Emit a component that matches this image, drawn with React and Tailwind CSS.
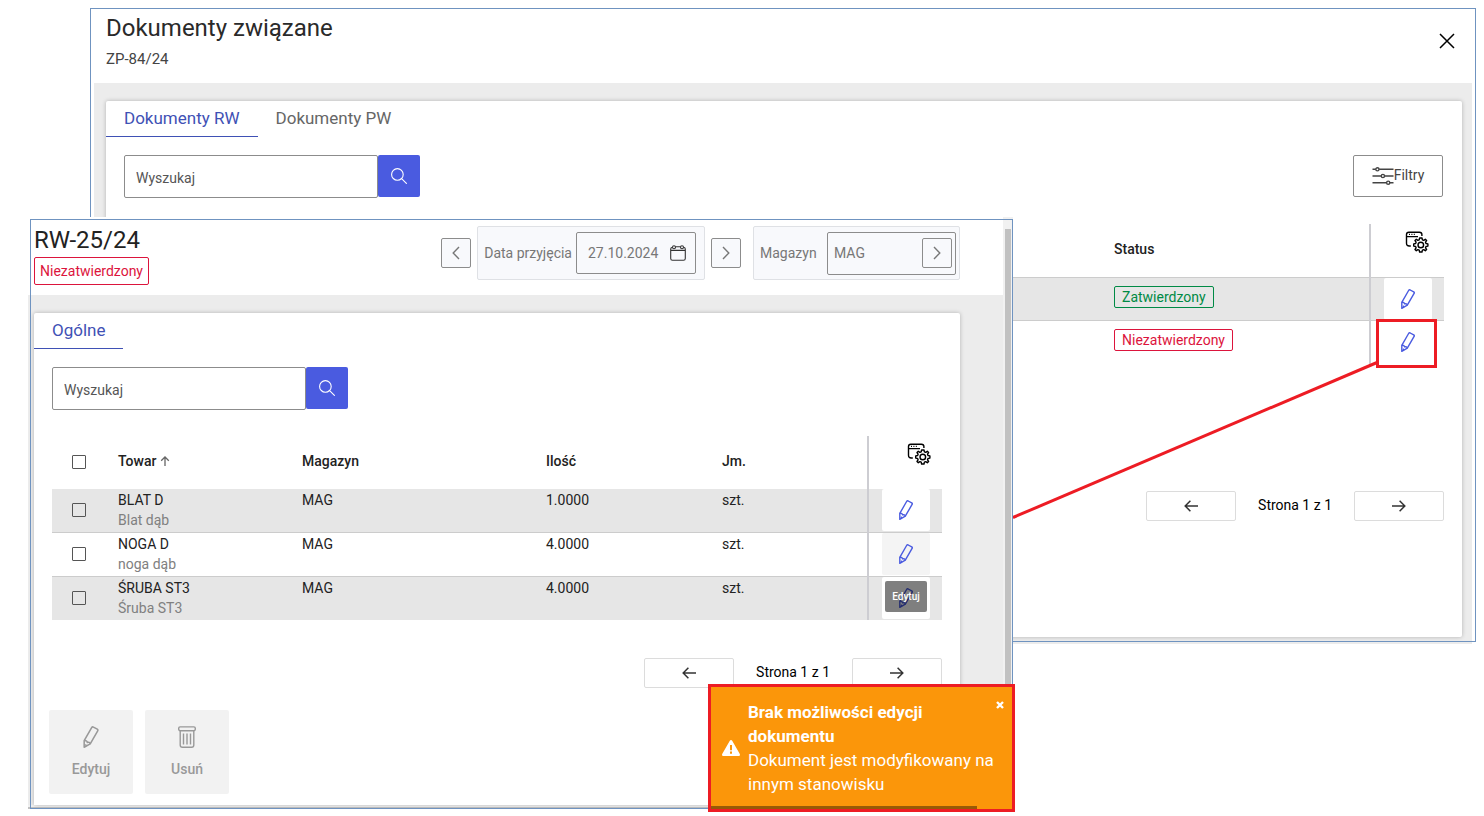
import React, { useState } from 'react';

const items = [
  { name: "BLAT D", desc: "Blat dąb", store: "MAG", qty: "1.0000", unit: "szt." },
  { name: "NOGA D", desc: "noga dąb", store: "MAG", qty: "4.0000", unit: "szt." },
  { name: "ŚRUBA ST3", desc: "Śruba ST3", store: "MAG", qty: "4.0000", unit: "szt." },
];

const documents = [
  { status: "Zatwierdzony", approved: true },
  { status: "Niezatwierdzony", approved: false },
];

/* Icons */
const PencilIcon = ({ className }) => (
  <svg viewBox="0 0 14 20" fill="none" stroke="currentColor" strokeWidth="1.4" strokeLinejoin="round" className={className}>
    <path d="M.8 13.4 7.6 1.5Q8.2.5 9.2 1L12.7 2.9Q13.6 3.5 13.1 4.4L6.3 16.2.8 19.3Z" />
    <path d="M.8 13.4Q3.3 12.9 3.6 14.9 5.8 14.3 6.3 16.2M1.8 16.8 3 18" />
  </svg>
);

const TrashIcon = ({ className }) => (
  <svg viewBox="0 0 18 22" fill="none" stroke="currentColor" strokeWidth="1.4" className={className}>
    <rect x=".7" y=".9" width="16.6" height="3.8" rx="1.4" />
    <path d="M2.2 4.9V19Q2.2 21.2 4.4 21.2H13.6Q15.8 21.2 15.8 19V4.9" />
    <path d="M5.5 7.4V18.4M9 7.4V18.4M12.500 7.4V18.4" />
  </svg>
);

const SearchIcon = () => (
  <svg viewBox="0 0 16 16" fill="none" stroke="currentColor" strokeWidth="1.1" strokeLinecap="round" className="w-4 h-4">
    <circle cx="6.4" cy="6.4" r="5.8" />
    <path d="M10.6 10.6 15.4 15.4" />
  </svg>
);

const FilterIcon = () => (
  <svg viewBox="0 0 22 18" fill="none" stroke="currentColor" strokeWidth="1.4" className="w-[22px] h-[18px]">
    <path d="M.5 2.3H3.7M7.1 2.3H21.5M.5 9H9.2M12.6 9H21.5M.5 15.7H14.5M17.9 15.7H21.5" />
    <circle cx="5.4" cy="2.3" r="1.6" />
    <circle cx="10.9" cy="9" r="1.6" />
    <circle cx="16.2" cy="15.7" r="1.6" />
  </svg>
);

const CalendarIcon = () => (
  <svg viewBox="0 0 16 16" fill="none" stroke="currentColor" strokeWidth="1.1" className="w-4 h-4 text-[#333333]">
    <path d="M2.4 2.2Q.7 2.4.7 4V13.4Q.7 15.2 2.5 15.2H13.5Q15.3 15.2 15.3 13.4V4Q15.3 2.4 13.6 2.2M5.4 1.8H10.6M.7 5.4H15.3" />
    <circle cx="4" cy="2.2" r="1.5" />
    <circle cx="12" cy="2.2" r="1.5" />
  </svg>
);

const ColumnsIcon = () => (
  <svg viewBox="0 0 24 22" fill="none" stroke="#000000" strokeWidth="1.4" className="w-6 h-[22px]">
    <path d="M5.8 15H4.2Q1.5 15 1.5 12.3V3.4Q1.5 1.2 3.8 1.2H14.4Q16.9 1.2 16.9 3.6V5M1.5 5.6H13" />
    <path d="M4 3.4H5M6.4 3.4H7.4M8.8 3.4H9.8" strokeWidth="1.1" />
    <circle cx="15.8" cy="14" r="2.8" />
    <path
      strokeLinejoin="round"
      d="M14.6 7H17L17.4 8.9 18.7 9.4 20.3 8.3 21.6 9.6 20.5 11.2 21 12.5 22.9 12.9V15.1L21 15.5 20.5 16.8 21.6 18.4 20.3 19.7 18.7 18.6 17.4 19.1 17 21H14.6L14.2 19.1 12.9 18.6 11.3 19.7 10 18.4 11.1 16.8 10.6 15.5 8.7 15.1V12.9L10.6 12.5 11.1 11.2 10 9.6 11.3 8.3 12.9 9.4 14.2 8.9Z"
    />
  </svg>
);

const Chevron = ({ left }) => (
  <svg viewBox="0 0 8 14" fill="none" stroke="currentColor" strokeWidth="1.4" className="w-2 h-3.5">
    <path d={left ? "M7 1 1.2 7 7 13" : "M1 1 6.8 7 1 13"} />
  </svg>
);

const Arrow = ({ left }) => (
  <svg viewBox="0 0 14 12" fill="none" stroke="#333333" strokeWidth="1.5" className="w-3.5 h-3">
    <path d={left ? "M14 6H1.2M6.4.8 1.2 6 6.4 11.2" : "M0 6H12.8M7.6.8 12.8 6 7.6 11.2"} />
  </svg>
);

/* Shared controls */
const Badge = ({ approved, className = "px-[7px]", children }) => (
  <span
    className={`inline-block rounded-xs border text-sm ${
      approved ? "border-[#008a45] text-[#008a45]" : "border-[#dc143c] text-[#dc143c]"
    } ${className}`}
  >
    {children}
  </span>
);

const Tab = ({ active, children }) => (
  <button
    type="button"
    className={`h-9 px-[18px] pb-0.5 text-[17px] leading-8 border-b ${
      active ? "border-[#3f51b5] text-[#3f51b5]" : "border-transparent text-[#666666]"
    }`}
  >
    {children}
  </button>
);

const SearchBox = () => (
  <form className="flex items-start" onSubmit={(e) => e.preventDefault()}>
    <input
      type="text"
      aria-label="Wyszukaj"
      placeholder="Wyszukaj"
      className="w-[254px] h-[43px] rounded-xs border border-[#8c8c8c] px-[11px] pt-0.5 text-sm placeholder:text-[#555555] outline-none"
    />
    <button type="submit" aria-label="Szukaj" className="w-[42px] h-[42px] rounded-xs bg-[#4a5be0] text-white flex items-center justify-center">
      <SearchIcon />
    </button>
  </form>
);

const StepButton = ({ left, label }) => (
  <button type="button" aria-label={label} className="w-[30px] h-[30px] shrink-0 rounded-xs border border-[#8c8c8c] bg-[#f8f9fc] text-[#777777] flex items-center justify-center">
    <Chevron left={left} />
  </button>
);

const EditButton = ({ className = "bg-white" }) => (
  <button type="button" aria-label="Edytuj" className={`w-12 h-[42px] rounded-xs text-[#4a5be0] flex items-center justify-center ${className}`}>
    <PencilIcon className="w-3.5 h-5" />
  </button>
);

const Pagination = () => (
  <nav className="flex items-center justify-end gap-[22px] text-sm text-black">
    <button type="button" aria-label="Poprzednia" className="w-[90px] h-[30px] rounded-xs border border-[#dcdcdc] flex items-center justify-center">
      <Arrow left />
    </button>
    <span className="pb-0.5">Strona 1 z 1</span>
    <button type="button" aria-label="Następna" className="w-[90px] h-[30px] rounded-xs border border-[#dcdcdc] flex items-center justify-center">
      <Arrow />
    </button>
  </nav>
);

const SettingsHead = ({ className }) => (
  <th className={`w-[74px] border-l-2 border-[#cdcdd2] align-top pt-[7px] ${className}`}>
    <button type="button" aria-label="Kolumny" className="block w-6">
      <ColumnsIcon />
    </button>
  </th>
);

const Toast = ({ onClose }) => (
  <div role="alert" className="absolute -right-0.5 -bottom-[3px] w-[307px] h-32 border-3 border-[#ed1c24] bg-[#fb960a] text-white">
    <div className="flex items-center gap-2 pl-[11px] pr-3 pt-[13px]">
      <svg viewBox="0 0 18 16" className="w-[18px] h-4 shrink-0">
        <path d="M9 0Q9.8 0 10.2.8L17.8 14Q18.4 16 16.8 16H1.2Q-.4 16 .2 14L7.8.8Q8.2 0 9 0Z" fill="#ffffff" />
        <path d="M9 5V10.2M9 11.6V13.8" stroke="#fb960a" strokeWidth="2" />
      </svg>
      <div className="text-[17px] leading-6">
        <p className="font-bold w-[200px]">Brak możliwości edycji dokumentu</p>
        <p>Dokument jest modyfikowany na innym stanowisku</p>
      </div>
    </div>
    <button type="button" aria-label="Zamknij" onClick={onClose} className="absolute top-3.5 right-2">
      <svg viewBox="0 0 8 8" stroke="#ffffff" strokeWidth="2.4" className="w-2 h-2">
        <path d="M1 1 7 7M7 1 1 7" />
      </svg>
    </button>
    <div className="absolute left-0 bottom-0 w-[266px] h-[3px] bg-[#975a06]"></div>
  </div>
);

const RelatedDocuments = () => (
  <section className="relative px-1 pt-px">
    <header className="h-[74px] flex items-start justify-between pl-3 pr-[17px] pt-[3px]">
      <div className="text-[#2a2a2a]">
        <h1 className="text-2xl leading-8">Dokumenty związane</h1>
        <p className="text-[15px] leading-[30px] text-[#444444]">ZP-84/24</p>
      </div>
      <button type="button" aria-label="Zamknij" className="mt-[21px]">
        <svg viewBox="0 0 16 16" stroke="#000000" strokeWidth="1.5" className="w-4 h-4">
          <path d="M1 1 15 15M15 1 1 15" />
        </svg>
      </button>
    </header>

    <div className="bg-[#ececec] pl-3 pr-2.5 pt-[18px] pb-[7px]">
      <div className="bg-white rounded-xs shadow-[0_0_4px_rgba(0,0,0,0.25)] pb-[116px]">
        <div className="flex">
          <Tab active>Dokumenty RW</Tab>
          <Tab>Dokumenty PW</Tab>
        </div>

        <div className="px-[18px] pt-[18px]">
          <div className="flex items-start justify-between">
            <SearchBox />
            <button type="button" className="h-[42px] w-[90px] mr-px rounded-xs border border-[#8c8c8c] flex items-center justify-center text-sm text-[#444444]">
              <FilterIcon />
              <span className="pb-0.5">Filtry</span>
            </button>
          </div>

          <table className="w-full table-fixed mt-[26px] text-sm text-left">
            <thead>
              <tr className="h-[53px]">
                <th></th>
                <th className="w-[256px] pb-[3px] font-medium text-[#222222]">Status</th>
                <SettingsHead className="pl-[34px]" />
              </tr>
            </thead>
            <tbody>
              {documents.map((doc, index) => (
                <tr key={index} className="h-11 first:h-[43px] odd:bg-[#e6e6e6] odd:border-y border-[#cccccc]">
                  <td></td>
                  <td className="align-top pt-2">
                    <Badge approved={doc.approved}>{doc.status}</Badge>
                  </td>
                  <td className="border-l-2 border-[#cdcdd2] pl-[13px]">
                    <EditButton />
                  </td>
                </tr>
              ))}
            </tbody>
          </table>

          <div className="mt-[127px]">
            <Pagination />
          </div>
        </div>
      </div>
    </div>

    {/* window outline */}
    <div className="absolute inset-x-0 top-0 bottom-0.5 border border-[#6f93c0] pointer-events-none"></div>
  </section>
);

const DocumentWindow = () => {
  const [toastOpen, setToastOpen] = useState(true);

  return (
    <section className="absolute left-7 right-[471px] top-[217px] bg-white">
      <div className="flex">
        <div className="grow">
          <header className="h-[78px] flex items-start justify-between pl-1.5 pr-[43px] pt-[9px]">
            <div>
              <h2 className="text-2xl leading-7 text-[#222222]">RW-25/24</h2>
              <Badge className="mt-[3px] py-[3px] px-[5px]">Niezatwierdzony</Badge>
            </div>
            <div className="flex items-center gap-1.5 text-sm text-[#777777]">
              <StepButton left label="Poprzedni dzień" />
              <div className="h-[54px] flex items-center gap-1 rounded-xs border border-[#dfe1e5] bg-[#f8f9fc] pl-1.5 pr-2">
                <label htmlFor="date">Data przyjęcia</label>
                <div className="h-[42px] w-[120px] flex items-center justify-between rounded-xs border border-[#8c8c8c] pl-[11px] pr-[9px]">
                  <input id="date" type="text" defaultValue="27.10.2024" className="w-[72px] outline-none" />
                  <CalendarIcon />
                </div>
              </div>
              <StepButton label="Następny dzień" />
              <div className="ml-1.5 h-[54px] flex items-center justify-between w-[207px] rounded-xs border border-[#dfe1e5] bg-[#f8f9fc] pl-1.5 pr-[3px]">
                <label htmlFor="store">Magazyn</label>
                <div className="h-[43px] w-[129px] flex items-center justify-between rounded-xs border border-[#8c8c8c] pl-1.5 pr-[3px]">
                  <input id="store" type="text" defaultValue="MAG" className="w-20 outline-none" />
                  <StepButton label="Wybierz magazyn" />
                </div>
              </div>
            </div>
          </header>

          <div className="bg-[#ececec] pt-[18px] pl-1.5 pr-[43px]">
            <div className="bg-white rounded-t-xs shadow-[0_0_4px_rgba(0,0,0,0.25)] pb-[11px]">
              <Tab active>Ogólne</Tab>

              <div className="px-[18px] pt-[18px]">
                <SearchBox />

                <table className="w-full table-fixed mt-[26px] text-sm text-left text-[#222222]">
                  <thead>
                    <tr className="h-[53px]">
                      <th className="w-[66px] pl-5 pb-0.5">
                        <input type="checkbox" aria-label="Zaznacz wszystko" className="block appearance-none w-3.5 h-3.5 rounded-[1px] border border-[#555555] bg-white" />
                      </th>
                      <th className="w-[184px] pb-[3px] font-medium">
                        <span className="flex items-center gap-1">
                          Towar
                          <svg viewBox="0 0 10 10" fill="none" stroke="#666666" strokeWidth="1.3" className="w-2.5 h-2.5">
                            <path d="M5 10V1M1.2 4.8 5 1 8.8 4.8" />
                          </svg>
                        </span>
                      </th>
                      <th className="w-[244px] pb-[3px] font-medium">Magazyn</th>
                      <th className="w-[176px] pb-[3px] font-medium">Ilość</th>
                      <th className="pb-[3px] font-medium">Jm.</th>
                      <SettingsHead className="pl-[38px]" />
                    </tr>
                  </thead>
                  <tbody>
                    {items.map((item, index) => (
                      <tr key={item.name} className="h-11 first:h-[43px] odd:bg-[#e6e6e6] even:border-y border-[#cccccc]">
                        <td className="pl-5">
                          <input type="checkbox" aria-label={item.name} className="block appearance-none w-3.5 h-3.5 rounded-[1px] border border-[#555555]" />
                        </td>
                        <td className="align-top pt-px">
                          {item.name}
                          <div className="text-[#808080]">{item.desc}</div>
                        </td>
                        <td className="align-top pt-px">{item.store}</td>
                        <td className="align-top pt-px">{item.qty}</td>
                        <td className="align-top pt-px">{item.unit}</td>
                        <td className="border-l-2 border-[#cdcdd2] pl-[13px]">
                          <div className="relative w-12">
                            <EditButton className={index === 1 ? "bg-[#f4f4f4]" : "bg-white"} />
                            {index === 2 && (
                              <div role="tooltip" className="absolute left-[3px] top-1 w-[42px] h-[31px] rounded-xs bg-black/50 text-white text-[10px] font-medium leading-[31px] text-center">
                                Edytuj
                              </div>
                            )}
                          </div>
                        </td>
                      </tr>
                    ))}
                  </tbody>
                </table>

                <div className="mt-[38px]">
                  <Pagination />
                </div>
              </div>

              <div className="flex gap-3 pl-[15px] mt-[22px] text-sm font-medium text-[#999999]">
                <button type="button" className="w-21 h-21 rounded-xs bg-[#f2f2f2] flex flex-col items-center justify-center gap-[11px]">
                  <PencilIcon className="w-4 h-[22px]" />
                  Edytuj
                </button>
                <button type="button" className="w-21 h-21 rounded-xs bg-[#f2f2f2] flex flex-col items-center justify-center gap-[11px]">
                  <TrashIcon className="w-[18px] h-[22px]" />
                  Usuń
                </button>
              </div>
            </div>
          </div>
        </div>

        {/* scrollbar */}
        <div className="w-2.5 shrink-0 pt-3 px-0.5 bg-[#f1f1f1]">
          <div className="h-full bg-[#c1c1c1]"></div>
        </div>
      </div>
      <div className="h-1 mr-0.5 border-t-2 border-[#f1f1f1] bg-[#c1c1c1]"></div>

      {/* window outline */}
      <div className="absolute left-0.5 top-0.5 right-0 bottom-0 border border-[#6f93c0] pointer-events-none"></div>

      {toastOpen && <Toast onClose={() => setToastOpen(false)} />}
    </section>
  );
};

const App = () => {
  return (
    <main className="relative min-h-screen bg-white pt-2 pl-[90px] pr-2 font-['Roboto',sans-serif]">
      <RelatedDocuments />
      <DocumentWindow />

      {/* highlighted edit button and its connector */}
      <div className="absolute right-[47px] top-[319px] w-[61px] h-[49px] border-3 border-[#ed1c24] pointer-events-none"></div>
      <svg viewBox="0 0 364 158" stroke="#ed1c24" strokeWidth="3" className="absolute right-[107px] top-[361px] w-[364px] h-[158px] pointer-events-none">
        <path d="M0 156.5 364 1.5" />
      </svg>
    </main>
  );
};

export default App;
